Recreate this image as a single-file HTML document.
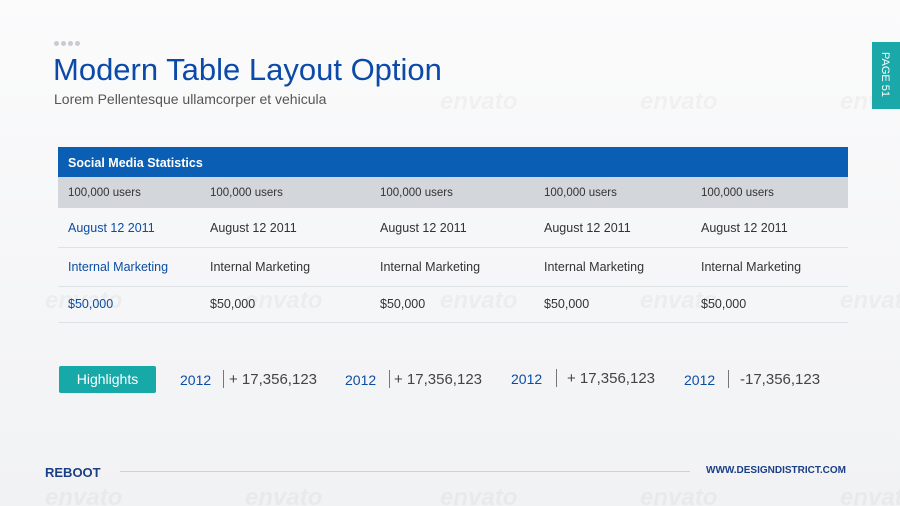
<!DOCTYPE html>
<html><head><style>
html,body{margin:0;width:900px;height:506px;overflow:hidden}
body{background:linear-gradient(180deg,#fbfbfc 0%,#f1f2f4 100%);font-family:"Liberation Sans",sans-serif;position:relative}
.a{position:absolute;white-space:nowrap}
.dots{display:flex;gap:2px}
.dots span{display:block;width:5px;height:5px;border-radius:50%;background:#c8cbd0}
.cell{position:absolute;font-size:12.5px;color:#333}
.blue{color:#0b4da3}
.sep{position:absolute;left:58px;width:790px;height:1px;background:#dfe1e4}
.wm{position:absolute;font-size:24px;font-weight:bold;font-style:italic;color:rgba(0,0,0,0.035)}
</style></head><body>
<div class="a dots" style="left:54px;top:41px"><span></span><span></span><span></span><span></span></div>
<div class="a" style="left:53px;top:52px;font-size:31px;color:#0b4aa8">Modern Table Layout Option</div>
<div class="a" style="left:54px;top:91px;font-size:14px;color:#555">Lorem Pellentesque ullamcorper et vehicula</div>

<div class="wm" style="left:440px;top:88px">envato</div>
<div class="wm" style="left:640px;top:88px">envato</div>
<div class="wm" style="left:840px;top:88px">envato</div>
<div class="wm" style="left:45px;top:287px">envato</div>
<div class="wm" style="left:245px;top:287px">envato</div>
<div class="wm" style="left:440px;top:287px">envato</div>
<div class="wm" style="left:640px;top:287px">envato</div>
<div class="wm" style="left:840px;top:287px">envato</div>
<div class="wm" style="left:45px;top:484px">envato</div>
<div class="wm" style="left:245px;top:484px">envato</div>
<div class="wm" style="left:440px;top:484px">envato</div>
<div class="wm" style="left:640px;top:484px">envato</div>
<div class="wm" style="left:840px;top:484px">envato</div>

<div class="a" style="left:872px;top:42px;width:28px;height:67px;background:#1aa8a8"></div>
<div class="a" style="left:879px;top:52px;color:#fff;font-size:11px;writing-mode:vertical-rl">PAGE 51</div>

<div class="a" style="left:58px;top:147px;width:790px;height:30px;background:#0a5fb4"></div>
<div class="a" style="left:68px;top:156px;color:#fff;font-size:12.5px;font-weight:bold">Social Media Statistics</div>
<div class="a" style="left:58px;top:177px;width:790px;height:31px;background:#d3d6da"></div>
<div class="cell" style="left:68px;top:187px;font-size:11.5px">100,000 users</div>
<div class="cell" style="left:210px;top:187px;font-size:11.5px">100,000 users</div>
<div class="cell" style="left:380px;top:187px;font-size:11.5px">100,000 users</div>
<div class="cell" style="left:544px;top:187px;font-size:11.5px">100,000 users</div>
<div class="cell" style="left:701px;top:187px;font-size:11.5px">100,000 users</div>

<div class="cell blue" style="left:68px;top:221px">August 12 2011</div>
<div class="cell" style="left:210px;top:221px">August 12 2011</div>
<div class="cell" style="left:380px;top:221px">August 12 2011</div>
<div class="cell" style="left:544px;top:221px">August 12 2011</div>
<div class="cell" style="left:701px;top:221px">August 12 2011</div>
<div class="sep" style="top:247px"></div>
<div class="cell blue" style="left:68px;top:260px">Internal Marketing</div>
<div class="cell" style="left:210px;top:260px">Internal Marketing</div>
<div class="cell" style="left:380px;top:260px">Internal Marketing</div>
<div class="cell" style="left:544px;top:260px">Internal Marketing</div>
<div class="cell" style="left:701px;top:260px">Internal Marketing</div>
<div class="sep" style="top:286px"></div>
<div class="cell blue" style="left:68px;top:297px">$50,000</div>
<div class="cell" style="left:210px;top:297px">$50,000</div>
<div class="cell" style="left:380px;top:297px">$50,000</div>
<div class="cell" style="left:544px;top:297px">$50,000</div>
<div class="cell" style="left:701px;top:297px">$50,000</div>
<div class="sep" style="top:322px"></div>

<div class="a" style="left:59px;top:366px;width:97px;height:27px;background:#17a8a8;border-radius:2px;color:#fff;font-size:14px;text-align:center;line-height:27px">Highlights</div>
<div class="a blue" style="left:180px;top:372px;font-size:14px">2012</div>
<div class="a" style="left:223px;top:370px;width:1px;height:18px;background:#777"></div>
<div class="a" style="left:229px;top:371px;font-size:15px;color:#444">+ 17,356,123</div>
<div class="a blue" style="left:345px;top:372px;font-size:14px">2012</div>
<div class="a" style="left:389px;top:370px;width:1px;height:18px;background:#777"></div>
<div class="a" style="left:394px;top:371px;font-size:15px;color:#444">+ 17,356,123</div>
<div class="a blue" style="left:511px;top:371px;font-size:14px">2012</div>
<div class="a" style="left:556px;top:369px;width:1px;height:18px;background:#777"></div>
<div class="a" style="left:567px;top:370px;font-size:15px;color:#444">+ 17,356,123</div>
<div class="a blue" style="left:684px;top:372px;font-size:14px">2012</div>
<div class="a" style="left:728px;top:370px;width:1px;height:18px;background:#777"></div>
<div class="a" style="left:740px;top:371px;font-size:15px;color:#444">-17,356,123</div>

<div class="a" style="left:45px;top:465px;font-size:13px;font-weight:bold;color:#1b3f86">REBOOT</div>
<div class="a" style="left:120px;top:471px;width:570px;height:1px;background:#cfd1d5"></div>
<div class="a" style="left:706px;top:465px;font-size:10px;font-weight:bold;color:#1b3f86">WWW.DESIGNDISTRICT.COM</div>
</body></html>
